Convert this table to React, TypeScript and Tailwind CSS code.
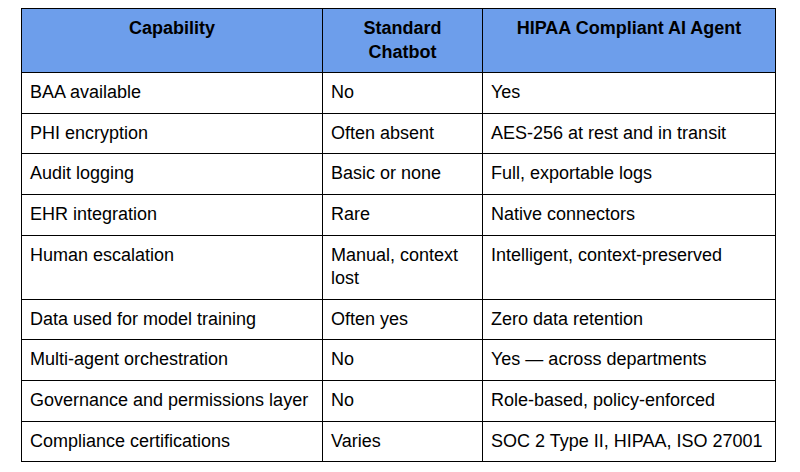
const ROWS: [string, string, string][] = [
  ["BAA available", "No", "Yes"],
  ["PHI encryption", "Often absent", "AES-256 at rest and in transit"],
  ["Audit logging", "Basic or none", "Full, exportable logs"],
  ["EHR integration", "Rare", "Native connectors"],
  ["Human escalation", "Manual, context lost", "Intelligent, context-preserved"],
  ["Data used for model training", "Often yes", "Zero data retention"],
  ["Multi-agent orchestration", "No", "Yes — across departments"],
  ["Governance and permissions layer", "No", "Role-based, policy-enforced"],
  ["Compliance certifications", "Varies", "SOC 2 Type II, HIPAA, ISO 27001"],
];

const HEADERS = ["Capability", "Standard Chatbot", "HIPAA Compliant AI Agent"];

export default function App() {
  return (
    <div className="h-[472px] w-[800px] bg-white pl-[21px] pt-[8px] font-['Liberation_Sans',Arial,sans-serif] text-[18px] leading-[23.6px] text-black">
      <table className="w-[754px] table-fixed border-collapse">
        <colgroup>
          <col className="w-[301px]" />
          <col className="w-[160px]" />
          <col className="w-[293px]" />
        </colgroup>
        <thead>
          <tr className="bg-[#6d9eeb]">
            {HEADERS.map((h) => (
              <th key={h} className="border border-black px-2 py-2 text-center align-top font-bold">
                {h}
              </th>
            ))}
          </tr>
        </thead>
        <tbody>
          {ROWS.map((r) => (
            <tr key={r[0]}>
              {r.map((cell, i) => (
                <td key={i} className="border border-black px-2 py-2 text-left align-top">
                  {cell}
                </td>
              ))}
            </tr>
          ))}
        </tbody>
      </table>
    </div>
  );
}
